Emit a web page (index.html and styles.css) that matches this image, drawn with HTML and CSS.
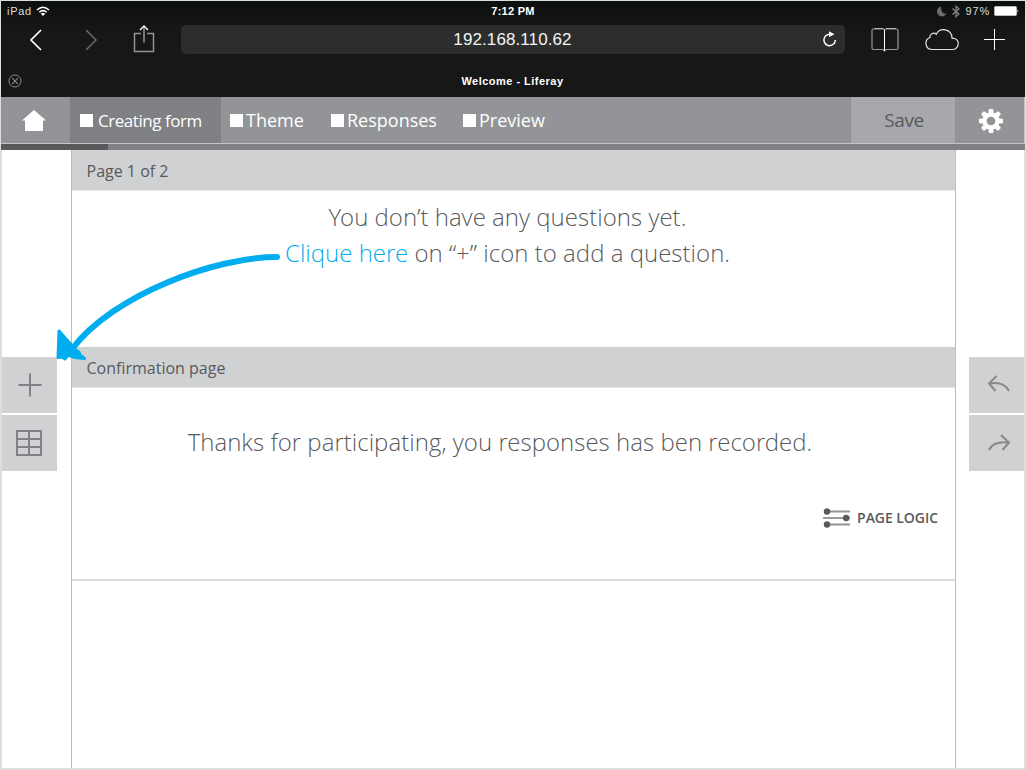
FILE: index.html
```html
<!DOCTYPE html>
<html lang="en">
<head>
<meta charset="utf-8">
<title>Welcome - Liferay</title>
<link rel="stylesheet" href="styles.css">
</head>
<body>
<div class="screen">
  <header class="chrome">
    <div class="status">
      <div class="status-left"><span class="device">iPad</span>
        <svg width="14" height="11" viewBox="0 0 14 11" fill="none" stroke="#fff" stroke-width="1.5"><path d="M1 4Q7-1.500 13 4M3.300 6.200Q7 3 10.700 6.200"/><path d="M7 10L4.700 7.700Q7 6 9.300 7.700Z" fill="#fff" stroke="none"/></svg>
      </div>
      <span class="clock">7:12 PM</span>
      <div class="status-right">
        <svg width="10" height="11" viewBox="0 0 10 11"><path d="M4 .5A5 5 0 1 0 9.500 7.600Q4 8.500 4 .5Z" fill="#6b6b6b"/></svg>
        <svg class="bluetooth" width="8" height="13" viewBox="0 0 8 13" fill="none" stroke="#858585" stroke-width="1.200"><path d="M.5 3.500L7 9L4 11.700V1.200L7 4L.5 9.500"/></svg>
        <span class="percent">97%</span>
        <svg width="25" height="10" viewBox="0 0 25 10"><rect x=".5" y=".5" width="22" height="9" rx="1" fill="#fff" stroke="#bbb"/><path d="M23.500 3Q25 5 23.500 7Z" fill="#fff"/></svg>
      </div>
    </div>
    <div class="toolbar">
      <svg class="back" width="14" height="22" viewBox="0 0 14 22" fill="none" stroke="#fff" stroke-width="1.700"><path d="M12 1L2 11L12 21"/></svg>
      <svg class="forward" width="14" height="22" viewBox="0 0 14 22" fill="none" stroke="#696969" stroke-width="1.500"><path d="M2 1L12 11L2 21"/></svg>
      <svg class="share" width="22" height="28" viewBox="0 0 22 28" fill="none"><path d="M8 8.500H1.500V26.500H20.500V8.500H14" stroke="#969191" stroke-width="1.500"/><path d="M11 17.500V2" stroke="#aaa" stroke-width="1.300"/><path d="M7 5L11 1L15 5" stroke="#fff" stroke-width="1.300"/></svg>
      <div class="address"><span class="url">192.168.110.62</span>
        <svg class="reload" width="15" height="17" viewBox="0 0 15 17"><path d="M8 3.300A5.700 5.700 0 1 0 13.300 9" fill="none" stroke="#fff" stroke-width="1.500"/><path d="M7 .2L12.500 3.300L7 6Z" fill="#fff"/></svg>
      </div>
      <svg class="book" width="28" height="26" viewBox="0 0 28 26" fill="none"><path d="M13 2H2.500Q1 2 1 3.500V21Q1 22.500 2.500 22.500H12L13.500 24L15 22.500H25.500Q27 22.500 27 21V3.500Q27 2 25.500 2H14.500" stroke="#9b9696" stroke-width="1.200"/><path d="M13.500 2.500V24" stroke="#fff"/><path d="M3 1.500H12L13.500 3L15 1.500H25" stroke="#ccc" stroke-width=".8"/></svg>
      <svg class="cloud" width="34" height="23" viewBox="0 0 34 23" fill="none" stroke="#e0e0e0" stroke-width="1.200"><path d="M7 21.500A6.200 6.200 0 0 1 5 9.500C4.500 6.500 8.500 3.800 11.300 6.200C15-.8 26.500.4 27.200 10.500C31.500 9.800 33.300 13 33.300 15.500C33.300 18.500 31 21.500 28 21.500Z"/></svg>
      <svg class="plus" width="22" height="22" viewBox="0 0 22 22"><path d="M0 10.500H21M10.500 0V21" stroke="#fff"/></svg>
    </div>
    <div class="tabs">
      <svg width="14" height="14" viewBox="0 0 14 14" fill="none" stroke="#898989"><circle cx="7" cy="7" r="6"/><path d="M4.200 4.200L9.800 9.800M9.800 4.200L4.200 9.800" stroke-width="1.100"/></svg>
      <span class="title">Welcome - Liferay</span>
    </div>
  </header>
  <nav class="nav">
    <a class="home"><svg width="24" height="21" viewBox="0 0 24 21"><path d="M12 0L24 10.500H21V21H3V10.500H0Z" fill="#fff"/></svg></a>
    <a class="item active"><i class="box"></i><span>Creating form</span></a>
    <a class="item theme"><i class="box"></i><span>Theme</span></a>
    <a class="item responses"><i class="box"></i><span>Responses</span></a>
    <a class="item preview"><i class="box"></i><span>Preview</span></a>
    <a class="save"><span>Save</span></a>
    <a class="settings"><svg width="24" height="24" viewBox="-12 -12 24 24"><g fill="#fff"><g id="tooth"><path d="M-2.700-7L-2.300-11.200Q-2.200-12-1.400-12H1.400Q2.200-12 2.300-11.200L2.700-7ZM-2.700 7L-2.300 11.200Q-2.200 12-1.400 12H1.400Q2.200 12 2.300 11.200L2.700 7Z"/></g><use href="#tooth" transform="rotate(45)"/><use href="#tooth" transform="rotate(90)"/><use href="#tooth" transform="rotate(135)"/></g><circle r="6.500" fill="none" stroke="#fff" stroke-width="4.300"/></svg></a>
  </nav>
  <div class="progress"><div class="progress-done"></div></div>
  <div class="workspace">
    <aside class="side">
      <button class="tool"><svg width="24" height="24" viewBox="0 0 24 24"><path d="M.5 12H23.500M12 .5V23.500" stroke="#808184" stroke-width="2"/></svg></button>
      <button class="tool table"><svg width="26" height="26" viewBox="0 0 26 26" fill="none" stroke="#808184" stroke-width="2"><path d="M1 1H25V25H1ZM13 1V25M1 9H25M1 17H25"/></svg></button>
    </aside>
    <main class="form">
      <h2 class="page-head"><span>Page 1 of 2</span></h2>
      <section class="empty">
        <p><span>You don’t have any questions yet.</span></p>
        <p><span><a>Clique here</a> on “+” icon to add a question.</span></p>
      </section>
      <h2 class="page-head"><span>Confirmation page</span></h2>
      <section class="thanks">
        <p><span>Thanks for participating, you responses has ben recorded.</span></p>
        <div class="logic"><svg width="28" height="20" viewBox="0 0 28 20"><path d="M2 3.500H27M2 16.500H27" stroke="#929396" stroke-width="1.800"/><path d="M0 10H27" stroke="#58595b" stroke-width="1.200"/><g fill="#58595b"><circle cx="4" cy="3.500" r="3.200"/><circle cx="23.200" cy="10" r="3.200"/><circle cx="4" cy="16.500" r="3.200"/></g></svg><span>PAGE LOGIC</span></div>
      </section>
    </main>
    <aside class="side right">
      <button class="tool undo"><svg width="24" height="18" viewBox="0 0 24 18" fill="none" stroke="#87888a" stroke-width="2"><path d="M9.500 1L2 8.500L8.500 16M2 8.500Q17 6 22 16"/></svg></button>
      <button class="tool redo"><svg width="24" height="18" viewBox="0 0 24 18" fill="none" stroke="#87888a" stroke-width="2"><path d="M14 1L22 8.500L15.500 16M22 8.500Q6 7 2 16"/></svg></button>
    </aside>
  </div>
  <svg class="arrow" width="240" height="120" viewBox="50 250 240 120"><path d="M277 257C215 257 113 295 72 349" fill="none" stroke="#00adef" stroke-width="6" stroke-linecap="round"/><path d="M59 331L71 344.500L74 349L79 352L80 355L84.500 358.500L75 357.500L68 355L65 359L62 357L58 357.500Z" fill="#00adef" stroke="#00adef" stroke-width="3" stroke-linejoin="round"/></svg>
</div>
</body>
</html>
```
FILE: styles.css
```css
* { box-sizing: border-box; }
body { margin: 0; font-family: "Open Sans", sans-serif; color: #58595b; background: #fff; }
h2, p { margin: 0; font-weight: 400; }
svg { display: block; flex: none; }
span { white-space: nowrap; }
.screen { position: relative; width: 1026px; height: 770px; border: 1px solid #dcdddd; border-bottom-width: 2px; display: flex; flex-direction: column; overflow: hidden; }
.chrome { flex: none; height: 96px; background: linear-gradient(#0c100f, #171717 35%, #171717); color: #fff; font-family: "Liberation Sans", sans-serif; }
.status { height: 20px; padding: 0 6px; display: grid; grid-template-columns: 1fr auto 1fr; align-items: center; font-size: 11px; }
.status-left, .status-right { display: flex; align-items: center; }
.status-left { gap: 4px; }
.device { letter-spacing: .7px; color: #ddd; }
.clock { font-weight: 700; letter-spacing: .25px; }
.status-right { justify-content: flex-end; }
.bluetooth { margin: 0 6px 0 5px; }
.percent { margin-right: 4px; letter-spacing: .8px; color: #ddd; }
.toolbar { height: 37px; padding-left: 28px; display: flex; align-items: center; }
.forward { margin-left: 41px; }
.share { margin-left: 35px; margin-top: -2px; }
.address { flex: none; width: 664px; height: 29px; margin-left: 26px; padding-right: 8px; border-radius: 5px; background: #2c2d2d; display: grid; grid-template-columns: 1fr auto 1fr; align-items: center; }
.url { grid-column: 2; padding-left: 7px; font-size: 17px; letter-spacing: .1px; color: #f4f4f4; }
.reload { justify-self: end; }
.book { margin-left: 26px; }
.cloud { margin-left: 26px; }
.plus { margin-left: 25px; }
.tabs { height: 37px; padding: 8px 8px 0 7px; display: grid; grid-template-columns: 1fr auto 1fr; align-items: center; }
.title { font-size: 11px; font-weight: 700; letter-spacing: .48px; }
.nav { flex: none; height: 47px; background: #939498; border-bottom: 1px solid #c4c5c8; display: flex; color: #fff; font-size: 18px; }
.nav a { display: flex; align-items: center; }
.home { width: 69px; padding-left: 21px; }
.item { gap: 3px; }
.box { flex: none; width: 13px; height: 13px; background: #fff; }
.nav .active { width: 151px; padding: 1px 0 0 10px; background: #808184; font-size: 17px; gap: 5px; letter-spacing: -.45px; }
.theme { width: 101px; padding-left: 9px; }
.responses { width: 132px; padding-left: 9px; }
.preview { padding-left: 9px; }
.save { width: 105px; margin-left: auto; padding: 0 0 0 2px; justify-content: center; background: #a7a8ac; color: #58595b; font-size: 19px; letter-spacing: -.4px; border-right: 1px solid #909195; }
.settings { width: 69px; padding: 1px 0 0 2px; justify-content: center; border-right: 1px solid #c4c5c8; }
.progress { flex: none; height: 6px; background: #808184; }
.progress-done { width: 107px; height: 6px; background: #58595b; }
.workspace { flex: 1; display: flex; border: 0 solid #dcdddd; border-width: 0 1px; }
.side { width: 69px; padding-top: 207px; display: flex; flex-direction: column; gap: 2px; }
.right { width: 68px; align-items: flex-end; }
.tool { width: 55px; height: 56px; border: 0; padding: 0; background: #d0d1d3; display: flex; align-items: center; justify-content: center; }
.table { padding-right: 2px; }
.undo { padding: 0 0 2px 4px; }
.redo { padding: 0 0 1px 4px; }
.form { width: 885px; border: 1px solid #bcbdc0; border-width: 0 1px; }
.page-head { height: 40px; padding: 2px 0 0 14.5px; background: #d0d1d3; display: flex; align-items: center; font-size: 16px; }
.empty { height: 157px; padding-top: 8px; border-top: 1px solid #e7e7e8; }
.empty p, .thanks p { display: flex; justify-content: center; padding-right: 12px; font-family: "Open Sans Light", "Open Sans", sans-serif; font-size: 24px; font-weight: 300; line-height: 36px; letter-spacing: .02px; }
.empty a { color: #00adef; }
.thanks { height: 194px; padding-top: 36px; border-top: 1px solid #e7e7e8; border-bottom: 2px solid #dcdddd; }
.thanks p { padding-right: 27px; }
.logic { margin: 48px 17px 0 0; height: 20px; display: flex; align-items: center; justify-content: flex-end; gap: 6px; font-size: 14px; font-weight: 600; letter-spacing: -.05px; }
.logic span { padding-bottom: 2px; }
.arrow { position: absolute; left: 49px; top: 249px; }
```
